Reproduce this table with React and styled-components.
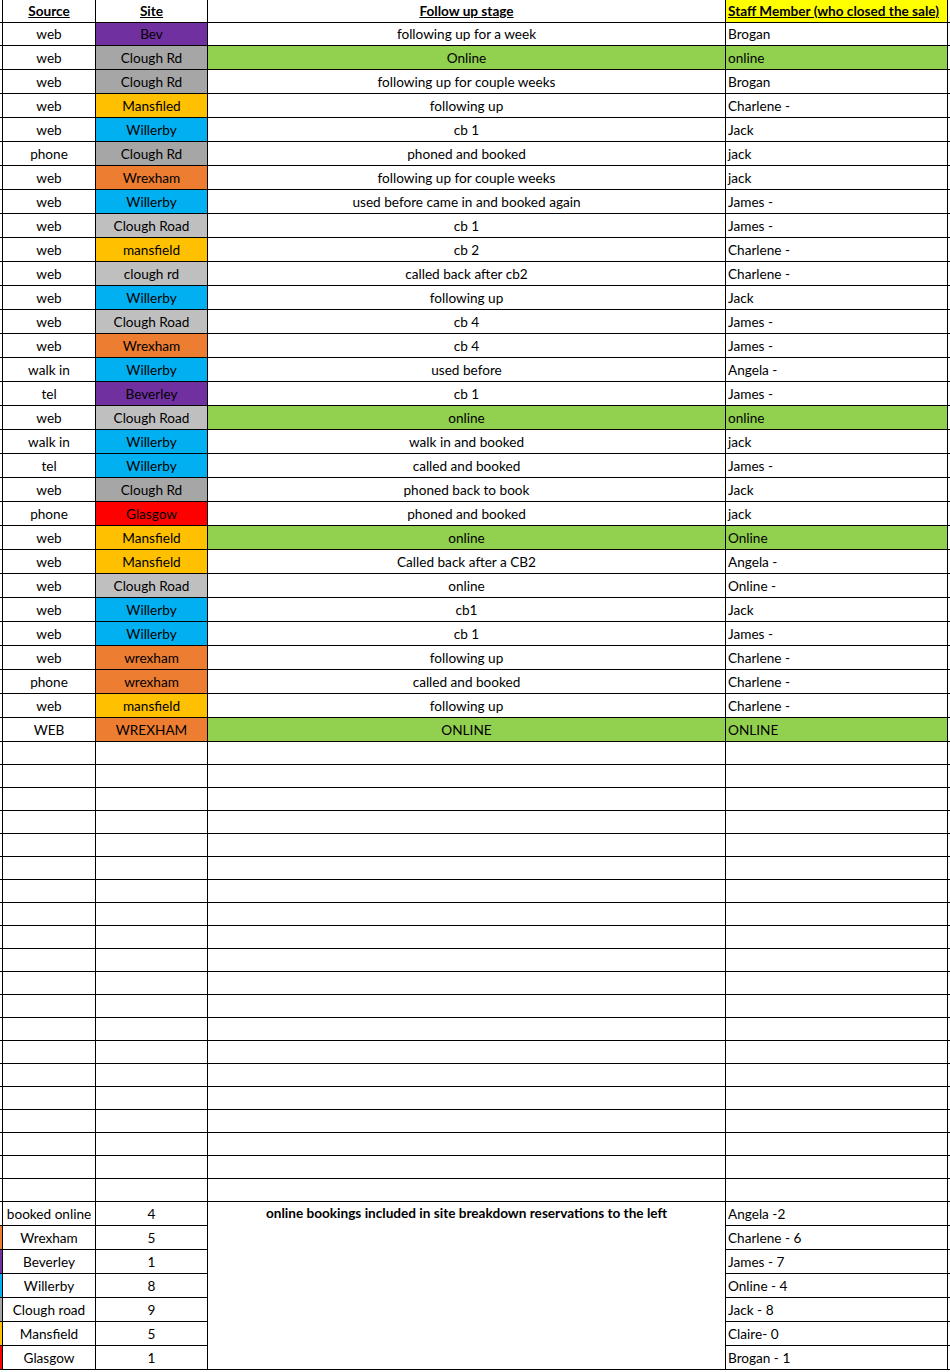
import React from 'react';
import styled, { createGlobalStyle } from 'styled-components';

const GlobalStyle = createGlobalStyle`
  html, body {
    margin: 0;
    padding: 0;
    background: #fff;
  }
  body {
    font-family: Lato, "Open Sans", sans-serif;
    color: #000;
  }
`;

const colors = {
  purple: '#7030A0',
  gray: '#A6A6A6',
  light: '#BFBFBF',
  amber: '#FFC000',
  blue: '#00B0F0',
  orange: '#ED7D31',
  red: '#FF0000',
  green: '#92D050',
  yellow: '#FFFF00',
};

const Sheet = styled.div`
  display: grid;
  grid-template-columns: 2px 94px 112px 518px 222px 2px;
  width: 950px;
  font-size: 13.6px;
  line-height: 1;
`;

const Cell = styled.div`
  display: flex;
  align-items: center;
  justify-content: ${p => (p.$left ? 'flex-start' : 'center')};
  padding-left: ${p => (p.$left ? '2px' : '0')};
  padding-top: 2px;
  height: ${p => p.$h}px;
  box-sizing: border-box;
  border-bottom: 1px solid #000;
  border-right: 1px solid #000;
  border-left: ${p => (p.$first ? '1px solid #000' : 'none')};
  background: ${p => p.$bg || 'transparent'};
  white-space: nowrap;
  overflow: hidden;
`;

const Gutter = styled.div`
  height: ${p => p.$h}px;
  box-sizing: border-box;
  border-bottom: 1px solid #000;
  background: ${p => p.$bg || 'transparent'};
`;

const HeadText = styled.span`
  font-weight: 700;
  text-decoration: underline;
`;

const Note = styled.div`
  grid-column: 4;
  grid-row: span 7;
  box-sizing: border-box;
  border-right: 1px solid #000;
  border-bottom: 1px solid #000;
  display: flex;
  justify-content: center;
  padding-top: 5px;
  font-weight: 700;
`;

const rows = [
  ['web', 'Bev', 'purple', 'following up for a week', 'Brogan'],
  ['web', 'Clough Rd', 'gray', 'Online', 'online', true],
  ['web', 'Clough Rd', 'gray', 'following up for couple weeks', 'Brogan'],
  ['web', 'Mansfiled', 'amber', 'following up', 'Charlene -'],
  ['web', 'Willerby', 'blue', 'cb 1', 'Jack'],
  ['phone', 'Clough Rd', 'gray', 'phoned and booked', 'jack'],
  ['web', 'Wrexham', 'orange', 'following up for couple weeks', 'jack'],
  ['web', 'Willerby', 'blue', 'used before came in and booked again', 'James -'],
  ['web', 'Clough Road', 'light', 'cb 1', 'James -'],
  ['web', 'mansfield', 'amber', 'cb 2', 'Charlene -'],
  ['web', 'clough rd', 'light', 'called back after cb2', 'Charlene -'],
  ['web', 'Willerby', 'blue', 'following up', 'Jack'],
  ['web', 'Clough Road', 'light', 'cb 4', 'James -'],
  ['web', 'Wrexham', 'orange', 'cb 4', 'James -'],
  ['walk in', 'Willerby', 'blue', 'used before', 'Angela -'],
  ['tel', 'Beverley', 'purple', 'cb 1', 'James -'],
  ['web', 'Clough Road', 'light', 'online', 'online', true],
  ['walk in', 'Willerby', 'blue', 'walk in and booked', 'jack'],
  ['tel', 'Willerby', 'blue', 'called and booked', 'James -'],
  ['web', 'Clough Rd', 'gray', 'phoned back to book', 'Jack'],
  ['phone', 'Glasgow', 'red', 'phoned and booked', 'jack'],
  ['web', 'Mansfield', 'amber', 'online', 'Online', true],
  ['web', 'Mansfield', 'amber', 'Called back after a CB2', 'Angela -'],
  ['web', 'Clough Road', 'light', 'online', 'Online -'],
  ['web', 'Willerby', 'blue', 'cb1', 'Jack'],
  ['web', 'Willerby', 'blue', 'cb 1', 'James -'],
  ['web', 'wrexham', 'orange', 'following up', 'Charlene -'],
  ['phone', 'wrexham', 'orange', 'called and booked', 'Charlene -'],
  ['web', 'mansfield', 'amber', 'following up', 'Charlene -'],
  ['WEB', 'WREXHAM', 'orange', 'ONLINE', 'ONLINE', true],
];

const summary = [
  ['booked online', '4', null, 'Angela -2'],
  ['Wrexham', '5', 'orange', 'Charlene - 6'],
  ['Beverley', '1', 'purple', 'James - 7'],
  ['Willerby', '8', 'blue', 'Online - 4'],
  ['Clough road', '9', 'gray', 'Jack - 8'],
  ['Mansfield', '5', 'amber', 'Claire- 0'],
  ['Glasgow', '1', 'red', 'Brogan - 1'],
];

export default function App() {
  return (
    <>
      <GlobalStyle />
      <Sheet>
        <Gutter $h={23} />
        <Cell $h={23} $first><HeadText>Source</HeadText></Cell>
        <Cell $h={23}><HeadText>Site</HeadText></Cell>
        <Cell $h={23}><HeadText>Follow up stage</HeadText></Cell>
        <Cell $h={23} $left $bg={colors.yellow}><HeadText>Staff Member (who closed the sale)</HeadText></Cell>
        <Gutter $h={23} />

        {rows.map(([src, site, c, stage, staff, online], i) => {
          const h = i === 0 ? 23 : 24;
          const bg = online ? colors.green : undefined;
          return (
            <React.Fragment key={i}>
              <Gutter $h={h} />
              <Cell $h={h} $first>{src}</Cell>
              <Cell $h={h} $bg={colors[c]}>{site}</Cell>
              <Cell $h={h} $bg={bg}>{stage}</Cell>
              <Cell $h={h} $left $bg={bg}>{staff}</Cell>
              <Gutter $h={h} />
            </React.Fragment>
          );
        })}

        {Array.from({ length: 20 }).map((_, i) => (
          <React.Fragment key={'e' + i}>
            <Gutter $h={23} />
            <Cell $h={23} $first />
            <Cell $h={23} />
            <Cell $h={23} />
            <Cell $h={23} />
            <Gutter $h={23} />
          </React.Fragment>
        ))}

        {summary.map(([label, count, c, staff], i) => (
          <React.Fragment key={'s' + i}>
            <Gutter $h={24} $bg={c ? colors[c] : undefined} style={{ gridColumn: 1 }} />
            <Cell $h={24} $first style={{ gridColumn: 2 }}>{label}</Cell>
            <Cell $h={24} style={{ gridColumn: 3 }}>{count}</Cell>
            {i === 0 && <Note>online bookings included in site breakdown reservations to the left</Note>}
            <Cell $h={24} $left style={{ gridColumn: 5 }}>{staff}</Cell>
            <Gutter $h={24} style={{ gridColumn: 6 }} />
          </React.Fragment>
        ))}
      </Sheet>
    </>
  );
}
